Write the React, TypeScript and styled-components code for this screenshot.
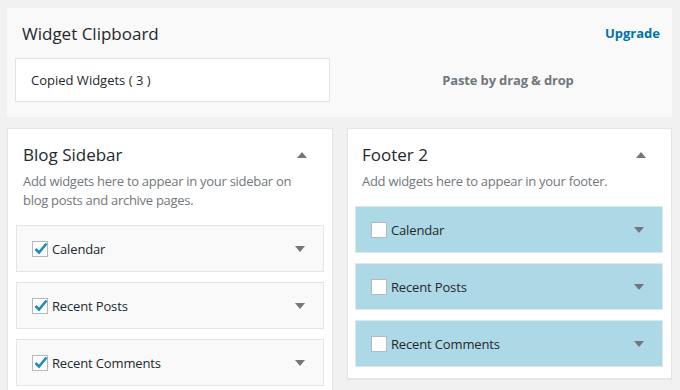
import React from "react";
import styled, { createGlobalStyle } from "styled-components";

const Global = createGlobalStyle`
  html, body { margin: 0; padding: 0; background: #f1f1f1; }
  body { font-family: "Open Sans", "Noto Sans", sans-serif; color: #23282d; }
  * { box-sizing: border-box; }
`;

const Page = styled.div`
  width: 680px;
  height: 390px;
  overflow: hidden;
  padding: 8px 8px 0 7px;
  display: flex;
  flex-direction: column;
  gap: 11px;
`;

const Clipboard = styled.section`
  flex: none;
  background: #f9f9f9;
  height: 109px;
  padding: 0 8px 0 8px;
  display: flex;
  flex-direction: column;
`;

const ClipHeader = styled.div`
  display: flex;
  align-items: center;
  justify-content: space-between;
  height: 50px;
  padding: 0 4px 0 7px;
`;

const ClipTitle = styled.h2`
  margin: 0;
  font-size: 17px;
  font-weight: 400;
  color: #23282d;
`;

const Upgrade = styled.a`
  color: #0073aa;
  font-weight: 700;
  font-size: 13px;
  text-decoration: none;
`;

const ClipBody = styled.div`
  display: grid;
  grid-template-columns: 315px 1fr;
  align-items: center;
`;

const CopiedBox = styled.div`
  background: #fff;
  border: 1px solid #e2e2e2;
  height: 44px;
  display: flex;
  align-items: center;
  padding-left: 15px;
  font-size: 13px;
  color: #23282d;
`;

const PasteHint = styled.div`
  text-align: center;
  font-size: 13px;
  font-weight: 700;
  color: #72777c;
  letter-spacing: -0.15px;
  padding-left: 22px;
`;

const Columns = styled.div`
  flex: none;
  display: grid;
  grid-template-columns: 326px 325px;
  column-gap: 14px;
  align-items: start;
`;

const Sidebar = styled.section<{ $tight?: boolean }>`
  background: #fff;
  border: 1px solid #e5e5e5;
  box-shadow: 0 1px 1px rgba(0, 0, 0, 0.04);
  padding: 0 8px 1px ${(p) => (p.$tight ? "7px" : "8px")};
`;

const SidebarHead = styled.div`
  display: flex;
  align-items: center;
  justify-content: space-between;
  padding: 13px 17px 0 7px;
  height: 38px;
`;

const SidebarTitle = styled.h2`
  margin: 0;
  font-size: 17px;
  font-weight: 400;
  color: #23282d;
`;

const Description = styled.p`
  margin: 5px 0 15px 0;
  padding: 0 7px;
  font-size: 13px;
  line-height: 19px;
  letter-spacing: -0.28px;
  color: #72777c;
`;

const WidgetRow = styled.div<{ $active?: boolean }>`
  height: 47px;
  margin-bottom: 10px;
  border: 1px solid ${(p) => (p.$active ? "#dfe7ea" : "#e5e5e5")};
  background: ${(p) => (p.$active ? "#add8e6" : "#f9f9f9")};
  display: flex;
  align-items: center;
  padding: 0 18px 0 15px;
  font-size: 13px;
  color: #23282d;
`;

const WidgetName = styled.span`
  flex: 1;
  margin-left: 4px;
  letter-spacing: -0.15px;
`;

const CheckBox = styled.span`
  width: 16px;
  height: 16px;
  border: 1px solid #b4b9be;
  background: #fff;
  position: relative;
  display: inline-block;
  flex: none;
`;

const CheckMark = styled.svg`
  position: absolute;
  left: 0;
  top: -2px;
`;

const Triangle = styled.span<{ $up?: boolean }>`
  width: 0;
  height: 0;
  border-left: 5px solid transparent;
  border-right: 5px solid transparent;
  ${(p) =>
    p.$up
      ? "border-bottom: 6px solid #72777c;"
      : "border-top: 6px solid #72777c;"}
`;

type W = { name: string };

const Widget: React.FC<{ name: string; checked?: boolean; active?: boolean }> = ({
  name,
  checked,
  active,
}) => (
  <WidgetRow $active={active}>
    <CheckBox>
      {checked && (
        <CheckMark width="16" height="16" viewBox="0 0 16 16">
          <path
            d="M2.5 9 L6 12.5 L13.5 3.5"
            fill="none"
            stroke="#1e8cbe"
            strokeWidth="2.6"
          />
        </CheckMark>
      )}
    </CheckBox>
    <WidgetName>{name}</WidgetName>
    <Triangle />
  </WidgetRow>
);

const widgets: W[] = [
  { name: "Calendar" },
  { name: "Recent Posts" },
  { name: "Recent Comments" },
];

export default function App() {
  return (
    <>
      <Global />
      <Page>
        <Clipboard>
          <ClipHeader>
            <ClipTitle>Widget Clipboard</ClipTitle>
            <Upgrade href="#">Upgrade</Upgrade>
          </ClipHeader>
          <ClipBody>
            <CopiedBox>Copied Widgets ( 3 )</CopiedBox>
            <PasteHint>Paste by drag &amp; drop</PasteHint>
          </ClipBody>
        </Clipboard>
        <Columns>
          <Sidebar>
            <SidebarHead>
              <SidebarTitle>Blog Sidebar</SidebarTitle>
              <Triangle $up />
            </SidebarHead>
            <Description>
              Add widgets here to appear in your sidebar on blog posts and archive pages.
            </Description>
            {widgets.map((w) => (
              <Widget key={w.name} name={w.name} checked />
            ))}
          </Sidebar>
          <Sidebar $tight>
            <SidebarHead>
              <SidebarTitle>Footer 2</SidebarTitle>
              <Triangle $up />
            </SidebarHead>
            <Description>Add widgets here to appear in your footer.</Description>
            {widgets.map((w) => (
              <Widget key={w.name} name={w.name} active />
            ))}
          </Sidebar>
        </Columns>
      </Page>
    </>
  );
}
